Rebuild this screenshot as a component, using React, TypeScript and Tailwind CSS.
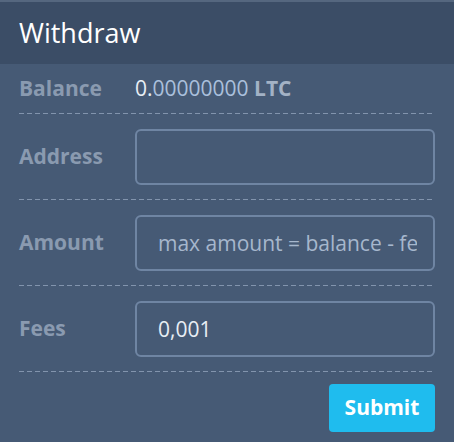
const font = { fontFamily: '"Open Sans", "Noto Sans", sans-serif' };

function Dash() {
    return <div className="h-px w-full bg-[repeating-linear-gradient(to_right,#8294ad_0_5px,transparent_5px_8px)]" />;
}

function Row({ label, children }: { label: string; children: React.ReactNode }) {
    return (
        <>
            <div className="flex items-center pt-[15px] pb-[14px]">
                <div className="w-[116px] shrink-0 text-[21px] font-bold text-[#8a9ab0]">{label}</div>
                {children}
            </div>
            <Dash />
        </>
    );
}

const inputCls = "w-[300px] h-[56px] rounded-md border-2 border-[#6f85a3] bg-transparent pl-[21px] pr-[16px] text-[21px] text-[#e8eef4] placeholder:text-[#a6b7cd] outline-none";

export default function App() {
    return (
        <div className="w-[454px] h-[442px] bg-[#465a75] overflow-hidden" style={font}>
            {/* Header */}
            <div className="h-[64px] bg-[#3b4d66] border-t-2 border-[#55677f] flex items-center px-[19px]">
                <span className="text-[27px] text-white">Withdraw</span>
            </div>

            <div className="px-[19px]">
                <div className="flex items-center h-[49px]">
                    <div className="w-[116px] shrink-0 text-[21px] font-bold text-[#8a9ab0]">Balance</div>
                    <div className="text-[21px]">
                        <span className="text-[#e8eef5]">0.</span>
                        <span className="text-[#aac0dc]">00000000</span>{' '}
                        <span className="font-bold text-[#a3b2c5]">LTC</span>
                    </div>
                </div>
                <Dash />

                <Row label="Address">
                    <input className={inputCls} />
                </Row>
                <Row label="Amount">
                    <input className={inputCls} placeholder="max amount = balance - fees" />
                </Row>
                <Row label="Fees">
                    <input className={inputCls} defaultValue="0,001" />
                </Row>

                <div className="flex justify-end pt-[12px]">
                    <button className="w-[106px] h-[48px] rounded bg-[#1fbcee] text-[21px] font-bold text-white">Submit</button>
                </div>
            </div>
        </div>
    );
}
